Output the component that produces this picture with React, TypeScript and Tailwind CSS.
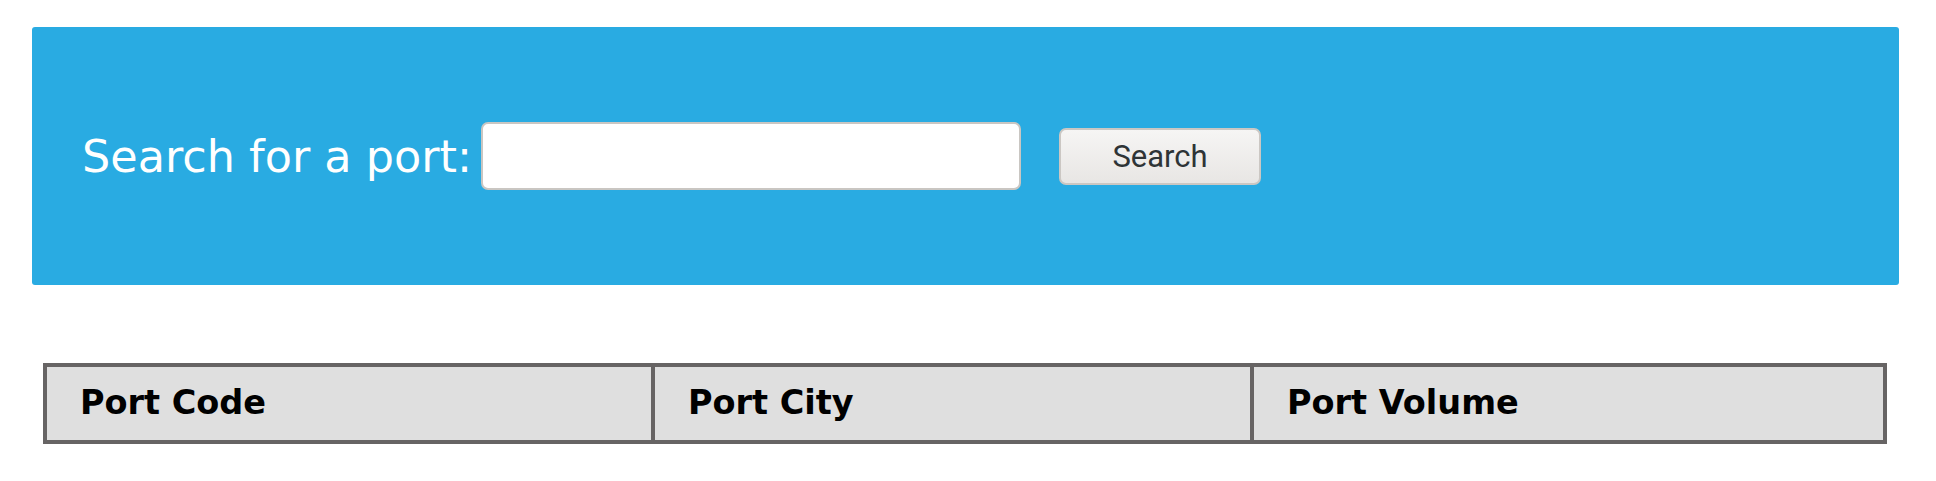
import React from "react";

export default function App() {
  return (
    <div className="w-[1936px] h-[481px] bg-white pt-[27px]" style={{ fontFamily: '"DejaVu Sans", sans-serif' }}>
      <div className="ml-[32px] w-[1867px] h-[258px] bg-[#29abe2] rounded-[3px] flex items-center pl-[50px]">
        <label className="w-[399px] shrink-0 text-white text-[44.5px] leading-none pt-[2px] font-['DejaVu_Sans',sans-serif] whitespace-nowrap">Search for a port:</label>
        <input
          type="text"
          className="w-[540px] h-[68px] bg-white border-2 border-[#c9c6c2] rounded-[7px] outline-none"
        />
        <button
          type="button"
          className="ml-[38px] w-[202px] h-[57px] border-2 border-[#cbc7c3] rounded-[7px] bg-gradient-to-b from-[#f6f5f4] to-[#e8e6e4] text-[#2e3436] text-[31px] leading-none font-['Roboto',sans-serif] flex items-center justify-center"
        >
          Search
        </button>
      </div>
      <div className="mt-[78px] ml-[43px] w-[1844px] h-[81px] border-4 border-[#676464] bg-[#dfdfdf] flex">
        <div className="w-[604px] flex items-center pl-[33px] text-[33.5px] font-bold text-black">Port Code</div>
        <div className="w-[599px] border-l-4 border-[#676464] flex items-center pl-[33px] text-[33.5px] font-bold text-black">Port City</div>
        <div className="w-[633px] border-l-4 border-[#676464] flex items-center pl-[33px] text-[33.5px] font-bold text-black">Port Volume</div>
      </div>
    </div>
  );
}
